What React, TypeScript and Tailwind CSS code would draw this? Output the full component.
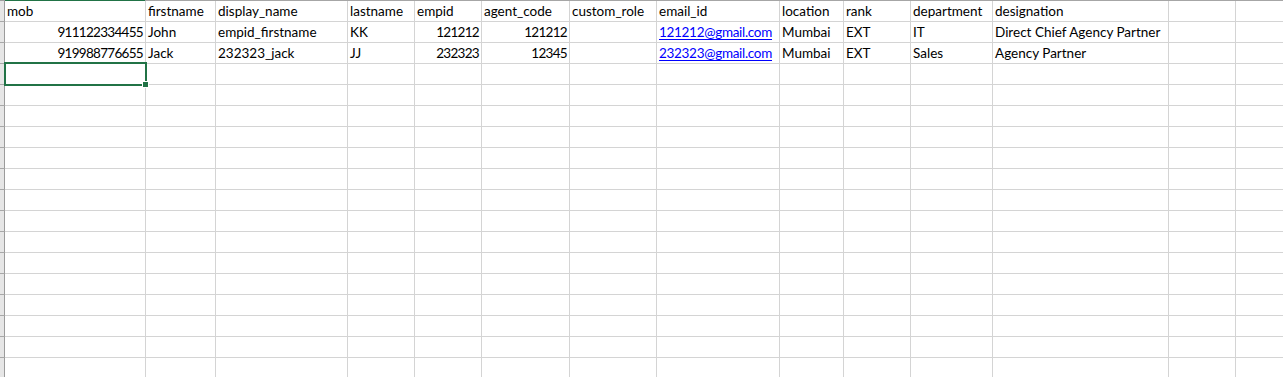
import React from 'react';

const cols = [141, 70, 132, 67, 67, 88, 87, 123, 64, 67, 82, 176, 67];

type Cell = { v: string; right?: boolean; link?: boolean };

const rows: Cell[][] = [
  [
    { v: 'mob' },
    { v: 'firstname' },
    { v: 'display_name' },
    { v: 'lastname' },
    { v: 'empid' },
    { v: 'agent_code' },
    { v: 'custom_role' },
    { v: 'email_id' },
    { v: 'location' },
    { v: 'rank' },
    { v: 'department' },
    { v: 'designation' },
  ],
  [
    { v: '911122334455', right: true },
    { v: 'John' },
    { v: 'empid_firstname' },
    { v: 'KK' },
    { v: '121212', right: true },
    { v: '121212', right: true },
    { v: '' },
    { v: '121212@gmail.com', link: true },
    { v: 'Mumbai' },
    { v: 'EXT' },
    { v: 'IT' },
    { v: 'Direct Chief Agency Partner' },
  ],
  [
    { v: '919988776655', right: true },
    { v: 'Jack' },
    { v: '232323_jack' },
    { v: 'JJ' },
    { v: '232323', right: true },
    { v: '12345', right: true },
    { v: '' },
    { v: '232323@gmail.com', link: true },
    { v: 'Mumbai' },
    { v: 'EXT' },
    { v: 'Sales' },
    { v: 'Agency Partner' },
  ],
];

const TOTAL_ROWS = 18;

export default function App() {
  return (
    <div
      className="relative w-[1283px] h-[377px] overflow-hidden bg-white text-black"
      style={{ fontFamily: 'Lato, "Open Sans", sans-serif' }}
    >
      {/* top edge: column header border, green over selected column */}
      <div className="flex h-px">
        <div className="w-[5px] bg-[#9f9f9f]" />
        <div className="w-[140px] bg-[#217346]" />
        <div className="flex-1 bg-[#a6a6a6]" />
      </div>

      {Array.from({ length: TOTAL_ROWS }).map((_, r) => {
        const data = rows[r];
        return (
          <div key={r} className="flex h-[21px]">
            <div className="w-[5px] shrink-0 bg-[#e6e6e6] border-r border-b border-r-[#9b9b9b] border-b-[#a8a8a8]" />
            {cols.map((w, c) => {
              const cell = data ? data[c] : undefined;
              return (
                <div
                  key={c}
                  style={{ width: w }}
                  className={`shrink-0 border-r border-b border-[#d4d4d4] flex items-end pb-[1px] px-[2px] whitespace-nowrap overflow-hidden text-[13.5px] leading-[17px] ${
                    cell?.right ? 'justify-end' : 'justify-start'
                  }`}
                >
                  {cell?.link ? (
                    <span className="text-[#0000ff] underline underline-offset-2 tracking-[-0.3px]">{cell.v}</span>
                  ) : cell?.right ? (
                    <span className="tracking-[-0.7px]">{cell.v}</span>
                  ) : (
                    <span>{cell?.v}</span>
                  )}
                </div>
              );
            })}
            <div className="flex-1 border-b border-[#d4d4d4]" />
          </div>
        );
      })}

      {/* active cell selection */}
      <div className="absolute left-[4px] top-[62px] w-[143px] h-[24px] border-2 border-[#217346]" />
      <div className="absolute left-[142px] top-[81px] w-[7px] h-[7px] bg-white" />
      <div className="absolute left-[143px] top-[82px] w-[5px] h-[5px] bg-[#217346]" />
    </div>
  );
}
